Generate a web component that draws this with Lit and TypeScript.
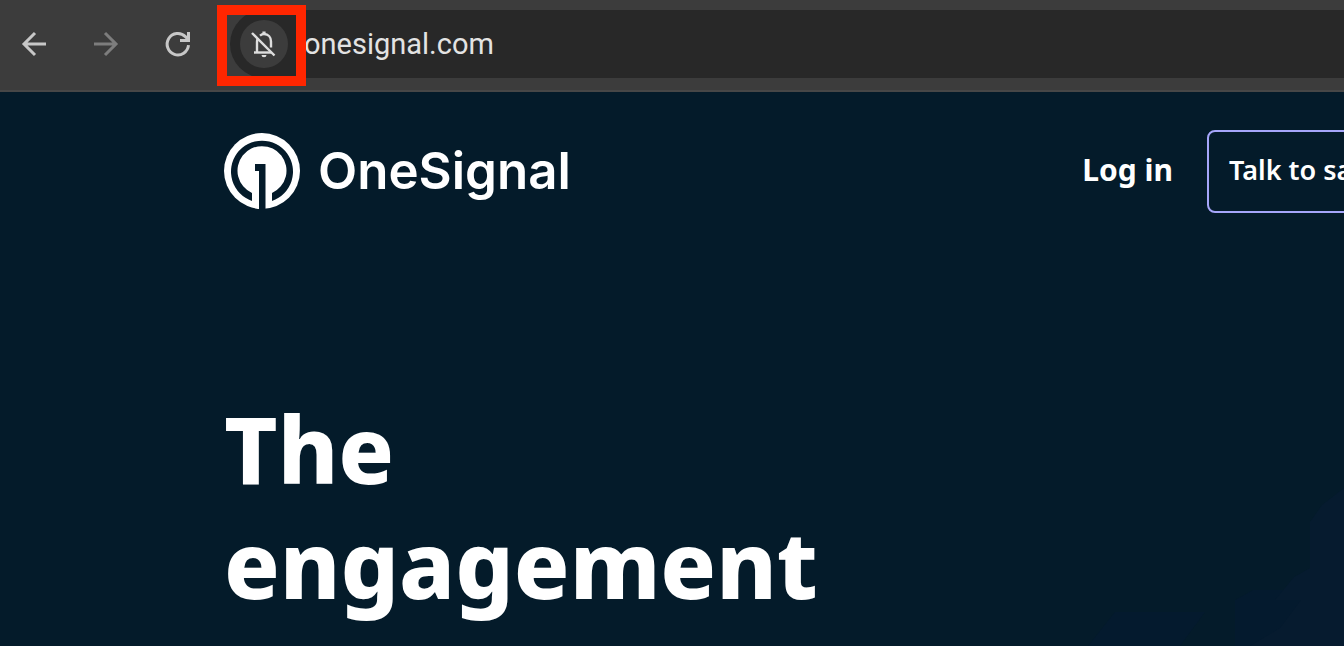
import { LitElement, html, css } from "lit";
import { customElement } from "lit/decorators.js";

@customElement("browser-toolbar")
export class BrowserToolbar extends LitElement {
  static styles = css`
    :host {
      display: block;
      background: #3c3c3c;
      border-bottom: 2px solid #474747;
    }
    .bar {
      display: flex;
      align-items: center;
      height: 90px;
      box-sizing: border-box;
      padding: 10px 0 12px;
    }
    .nav {
      flex: none;
      width: 72px;
      height: 68px;
      padding: 0;
      border: 0;
      background: none;
      color: #c7c7c7;
      display: grid;
      place-items: center;
    }
    .nav:first-child {
      width: 70px;
    }
    .nav:disabled {
      color: #7d7d7d;
    }
    .nav svg {
      width: 32px;
      height: 32px;
    }
    .omnibox {
      flex: 1;
      min-width: 0;
      height: 68px;
      margin-left: 16px;
      box-sizing: border-box;
      padding-left: 10px;
      display: flex;
      align-items: center;
      gap: 16px;
      background: #282828;
      border-radius: 34px 0 0 34px;
    }
    .site {
      position: relative;
      flex: none;
      width: 48px;
      height: 48px;
      padding: 0;
      border: 0;
      border-radius: 50%;
      background: #3c3c3c;
      color: #dedede;
    }
    .site svg {
      display: block;
      width: 48px;
      height: 48px;
    }
    .mark {
      position: absolute;
      inset: -15px -18px -18px -23px;
      border: 10px solid #ff2600;
      pointer-events: none;
    }
    .url {
      flex: 1;
      min-width: 0;
      height: 48px;
      padding: 0;
      border: 0;
      outline: 0;
      background: none;
      color: #e3e3e3;
      font: 400 29px/48px Roboto, sans-serif;
    }
  `;

  render() {
    return html`
      <div class="bar">
        <button class="nav" aria-label="Back">
          <svg viewBox="0 0 32 32" fill="none" stroke="currentColor" stroke-width="3">
            <path d="M27 16H5M16 5 5 16l11 11" />
          </svg>
        </button>
        <button class="nav" aria-label="Forward" disabled>
          <svg viewBox="0 0 32 32" fill="none" stroke="currentColor" stroke-width="3">
            <path d="M4 16h21M15 5l11 11-11 11" />
          </svg>
        </button>
        <button class="nav" aria-label="Reload">
          <svg viewBox="0 0 32 32" fill="none" stroke="currentColor" stroke-width="3">
            <path d="M26.500 17.200A10.700 10.700 0 1 1 23.400 8.600L26.500 11.700" />
            <path d="M26.500 4v8.500H18" />
          </svg>
        </button>
        <div class="omnibox">
          <button class="site" aria-label="Notifications blocked">
            <svg viewBox="0 0 48 48" fill="none" stroke="currentColor" stroke-width="2.4">
              <path d="M12 13l22.500 22.500" />
              <path d="M14 32.500h17.500" />
              <path d="M17 32V22q0-2 1-4" />
              <path d="M20 15.600q2-1.600 4-1.600c4.400 0 7 3.400 7 7.400v6" />
              <path d="M24 11.500v3" stroke-width="3.200" />
              <path d="M21.500 35h5a2.500 2.300 0 0 1-5 0z" fill="currentColor" stroke="none" />
            </svg>
            <span class="mark"></span>
          </button>
          <input class="url" type="text" aria-label="Address" value="onesignal.com" spellcheck="false" />
        </div>
      </div>
    `;
  }
}

@customElement("app-root")
export class AppRoot extends LitElement {
  static styles = css`
    :host {
      display: flex;
      flex-direction: column;
      min-height: 100vh;
      overflow: hidden;
      background: #041b2a;
      color: #fff;
      font-family: "Noto Sans", sans-serif;
    }
    .page {
      position: relative;
      flex: 1;
      padding: 38px 0 0 224px;
    }
    .glow {
      position: absolute;
      right: 0;
      bottom: 0;
      width: 256px;
      height: 158px;
    }
    header {
      display: grid;
      grid-template-columns: 1fr auto 137px;
      align-items: center;
      column-gap: 34px;
    }
    .brand {
      display: flex;
      align-items: center;
      gap: 18px;
      padding-bottom: 2px;
      color: inherit;
      text-decoration: none;
      font: 600 51px/60px Inter, sans-serif;
    }
    .brand svg {
      width: 76px;
      height: 76px;
    }
    .login {
      padding-bottom: 4px;
      color: inherit;
      text-decoration: none;
      font-weight: 700;
      font-size: 30px;
      line-height: 44px;
    }
    .talk {
      box-sizing: border-box;
      height: 83px;
      width: max-content;
      padding: 0 20px 4px;
      border: 2px solid #a6a6fa;
      border-radius: 8px;
      display: flex;
      align-items: center;
      color: inherit;
      text-decoration: none;
      font-weight: 600;
      font-size: 27px;
      line-height: 40px;
    }
    h1 {
      position: relative;
      margin: 178px 0 0;
      max-width: 680px;
      font-weight: 800;
      font-size: 92px;
      line-height: 115px;
    }
  `;

  render() {
    return html`
      <browser-toolbar></browser-toolbar>
      <main class="page">
        <svg class="glow" viewBox="0 0 256 158" aria-hidden="true">
          <path fill="#041a2e" d="M0 158 27 124H117L92 158zM147 158V112L165 102H222V158z" />
          <path fill="#061b2f" d="M256 0 234 17 222 34V80L206 89 187 112H213L192 140 162 158H256z" />
        </svg>
        <header>
          <a class="brand" href="#">
            <svg viewBox="0 0 76 76" aria-hidden="true">
              <circle cx="38" cy="38" r="38" fill="#fff" />
              <path fill="#041b2a" d="M28 60V68A31 31 0 1 1 48 68V60A24.500 24.500 0 1 0 28 60z" />
              <path fill="#041b2a" d="M31 31H41.500V76H35V38H31z" />
            </svg>
            <span>OneSignal</span>
          </a>
          <a class="login" href="#">Log in</a>
          <a class="talk" href="#">Talk to sales</a>
        </header>
        <h1>The engagement</h1>
      </main>
    `;
  }
}
